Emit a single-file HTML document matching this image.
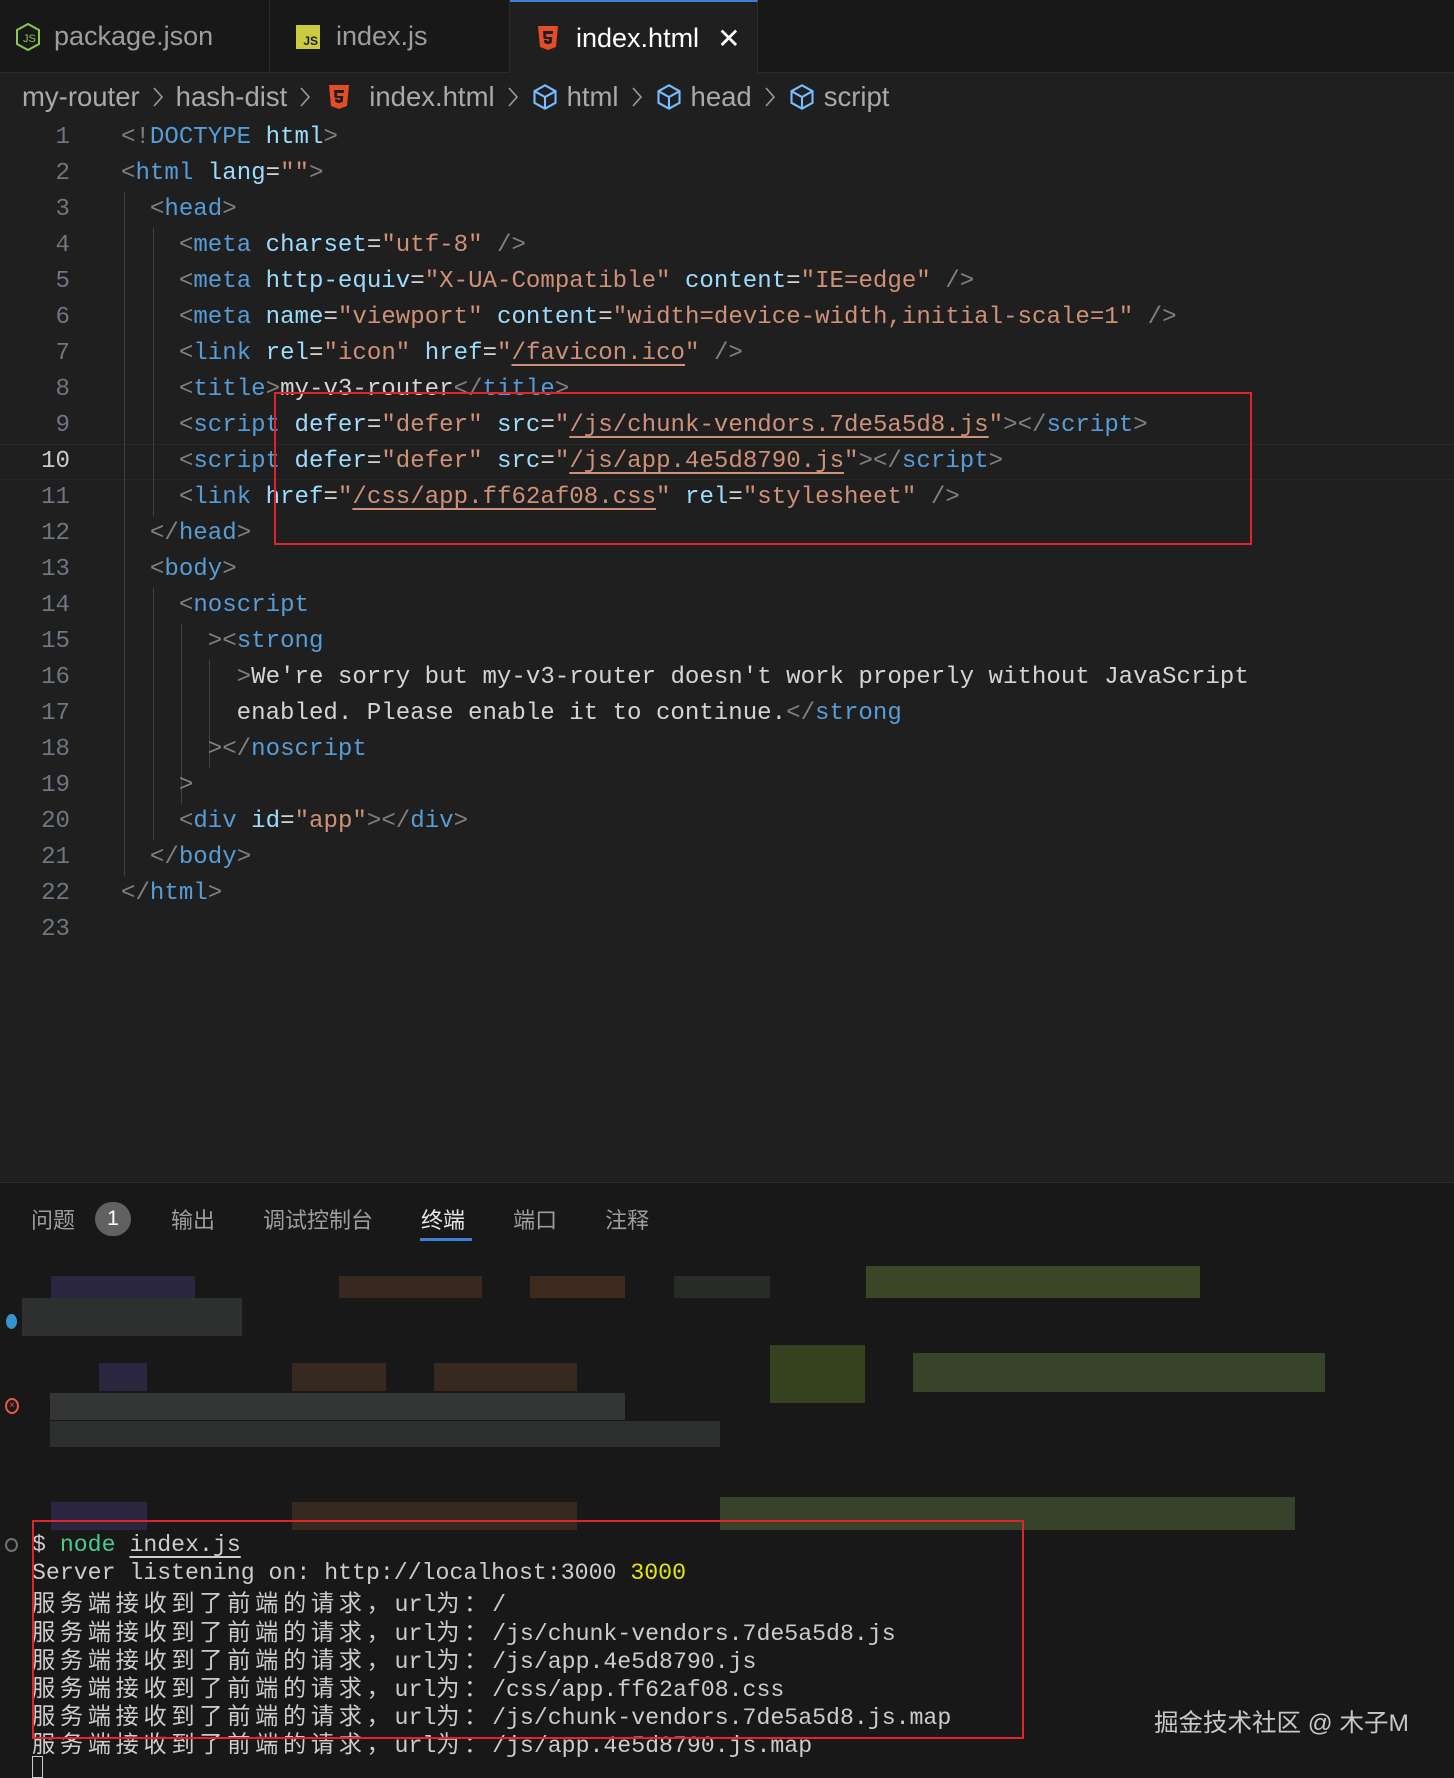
<!DOCTYPE html>
<html><head><meta charset="utf-8"><style>
*{margin:0;padding:0;box-sizing:border-box}
body{width:1454px;height:1778px;background:#1f1f1f;position:relative;overflow:hidden;font-family:"Liberation Sans","Noto Sans CJK SC",sans-serif;color:#ccc}
.abs{position:absolute}
.tabbar{left:0;top:0;width:1454px;height:73px;background:#181818;border-bottom:1px solid #2b2b2b}
.tab{top:0;height:73px;display:flex;align-items:center;font-size:27px;color:#9d9d9d;border-right:1px solid #2b2b2b}
.crumb{left:22px;top:80px;height:34px;font-size:27.5px;color:#a9a9a9;white-space:nowrap;display:flex;align-items:center;gap:0}
.sep{margin:0 12px;display:inline-block}
.code{font-family:"Liberation Mono",monospace;font-size:24.1px;white-space:pre}
.ln{left:0;width:70px;text-align:right;color:#6e7681;height:36px;line-height:36px}
.cl{left:121px;height:36px;line-height:36px}
.p{color:#808080}.t{color:#569cd6}.a{color:#9cdcfe}.s{color:#ce9178}.x{color:#d4d4d4}
.u{text-decoration:underline;text-underline-offset:5px}
.guide{width:1px;background:#404040}
.term{font-family:"Liberation Mono",monospace;font-size:23.2px;white-space:pre;color:#cccccc;left:32px;height:28px;line-height:28px}
.cj{font-family:"Noto Sans CJK SC",sans-serif;letter-spacing:4.7px}
.blk{position:absolute}
.ct{margin-left:8px}
</style></head><body>
<div class="abs tabbar"></div>
<div class="abs tab" style="left:0;width:270px;padding-left:14px">
<svg width="28" height="30" viewBox="0 0 28 30"><path d="M14 2 L25 8 L25 22 L14 28 L3 22 L3 8Z" fill="none" stroke="#8cc84b" stroke-width="2"/><text x="9" y="20" font-size="11" fill="#8cc84b" font-family="Liberation Sans">JS</text></svg>
<span style="margin-left:12px">package.json</span></div>
<div class="abs tab" style="left:270px;width:240px;padding-left:26px">
<div style="width:24px;height:24px;background:#cbcb41;color:#1f1f1f;font-size:12px;font-weight:bold;display:flex;align-items:flex-end;justify-content:flex-end;padding:0 2px 1px 0">JS</div>
<span style="margin-left:16px">index.js</span></div>
<div class="abs tab" style="left:510px;width:248px;padding-left:26px;background:#1f1f1f;border-top:2px solid #3b82d6;height:74px;color:#fff">
<svg width="24" height="28" viewBox="0 0 24 28"><path d="M2 2h20l-2 21-8 3-8-3z" fill="#e44d26"/><path d="M7 7h10l-.3 3H10l.3 3h6l-.6 6-3.7 1.3-3.7-1.3-.2-3h3l.1 1 .8.3.8-.3.2-2H7.6z" fill="#1f1f1f"/></svg>
<span style="margin-left:16px">index.html</span><span style="margin-left:18px;font-size:28px">✕</span></div>

<div class="abs crumb">my-router<svg class="sep" width="12" height="22" viewBox="0 0 12 22"><path d="M2 2 L10 11 L2 20" fill="none" stroke="#999" stroke-width="1.6"/></svg>hash-dist<svg class="sep" width="12" height="22" viewBox="0 0 12 22"><path d="M2 2 L10 11 L2 20" fill="none" stroke="#999" stroke-width="1.6"/></svg>
<svg width="24" height="28" viewBox="0 0 24 28" style="margin-left:4px"><path d="M2 2h20l-2 21-8 3-8-3z" fill="#e44d26"/><path d="M7 7h10l-.3 3H10l.3 3h6l-.6 6-3.7 1.3-3.7-1.3-.2-3h3l.1 1 .8.3.8-.3.2-2H7.6z" fill="#1f1f1f"/></svg>
<span style="margin-left:18px">index.html</span><svg class="sep" width="12" height="22" viewBox="0 0 12 22"><path d="M2 2 L10 11 L2 20" fill="none" stroke="#999" stroke-width="1.6"/></svg>
<svg width="28" height="28" viewBox="0 0 24 24"><path d="M12 2 L21 7 L21 17 L12 22 L3 17 L3 7Z M3 7 L12 12 L21 7 M12 12 L12 22" fill="none" stroke="#75beff" stroke-width="1.8"/></svg><span class="ct">html</span><svg class="sep" width="12" height="22" viewBox="0 0 12 22"><path d="M2 2 L10 11 L2 20" fill="none" stroke="#999" stroke-width="1.6"/></svg>
<svg width="28" height="28" viewBox="0 0 24 24"><path d="M12 2 L21 7 L21 17 L12 22 L3 17 L3 7Z M3 7 L12 12 L21 7 M12 12 L12 22" fill="none" stroke="#75beff" stroke-width="1.8"/></svg><span class="ct">head</span><svg class="sep" width="12" height="22" viewBox="0 0 12 22"><path d="M2 2 L10 11 L2 20" fill="none" stroke="#999" stroke-width="1.6"/></svg>
<svg width="28" height="28" viewBox="0 0 24 24"><path d="M12 2 L21 7 L21 17 L12 22 L3 17 L3 7Z M3 7 L12 12 L21 7 M12 12 L12 22" fill="none" stroke="#75beff" stroke-width="1.8"/></svg><span class="ct">script</span></div>

<div class="abs" style="left:0;top:444px;width:1454px;height:36px;border-top:1px solid #282828;border-bottom:1px solid #282828"></div>

<div class="abs guide" style="left:124px;top:192px;height:684px"></div>
<div class="abs guide" style="left:153px;top:228px;height:288px"></div>
<div class="abs guide" style="left:153px;top:588px;height:252px"></div>
<div class="abs guide" style="left:181px;top:624px;height:180px"></div>
<div class="abs guide" style="left:209px;top:660px;height:108px"></div>

<div class="code">
<div class="abs ln" style="top:120px">1</div>
<div class="abs ln" style="top:156px">2</div>
<div class="abs ln" style="top:192px">3</div>
<div class="abs ln" style="top:228px">4</div>
<div class="abs ln" style="top:264px">5</div>
<div class="abs ln" style="top:300px">6</div>
<div class="abs ln" style="top:336px">7</div>
<div class="abs ln" style="top:372px">8</div>
<div class="abs ln" style="top:408px">9</div>
<div class="abs ln" style="top:444px;color:#ccc">10</div>
<div class="abs ln" style="top:480px">11</div>
<div class="abs ln" style="top:516px">12</div>
<div class="abs ln" style="top:552px">13</div>
<div class="abs ln" style="top:588px">14</div>
<div class="abs ln" style="top:624px">15</div>
<div class="abs ln" style="top:660px">16</div>
<div class="abs ln" style="top:696px">17</div>
<div class="abs ln" style="top:732px">18</div>
<div class="abs ln" style="top:768px">19</div>
<div class="abs ln" style="top:804px">20</div>
<div class="abs ln" style="top:840px">21</div>
<div class="abs ln" style="top:876px">22</div>
<div class="abs ln" style="top:912px">23</div>

<div class="abs cl" style="top:120px"><span class="p">&lt;!</span><span class="t">DOCTYPE</span> <span class="a">html</span><span class="p">&gt;</span></div>
<div class="abs cl" style="top:156px"><span class="p">&lt;</span><span class="t">html</span> <span class="a">lang</span><span class="x">=</span><span class="s">""</span><span class="p">&gt;</span></div>
<div class="abs cl" style="top:192px">  <span class="p">&lt;</span><span class="t">head</span><span class="p">&gt;</span></div>
<div class="abs cl" style="top:228px">    <span class="p">&lt;</span><span class="t">meta</span> <span class="a">charset</span><span class="x">=</span><span class="s">"utf-8"</span> <span class="p">/&gt;</span></div>
<div class="abs cl" style="top:264px">    <span class="p">&lt;</span><span class="t">meta</span> <span class="a">http-equiv</span><span class="x">=</span><span class="s">"X-UA-Compatible"</span> <span class="a">content</span><span class="x">=</span><span class="s">"IE=edge"</span> <span class="p">/&gt;</span></div>
<div class="abs cl" style="top:300px">    <span class="p">&lt;</span><span class="t">meta</span> <span class="a">name</span><span class="x">=</span><span class="s">"viewport"</span> <span class="a">content</span><span class="x">=</span><span class="s">"width=device-width,initial-scale=1"</span> <span class="p">/&gt;</span></div>
<div class="abs cl" style="top:336px">    <span class="p">&lt;</span><span class="t">link</span> <span class="a">rel</span><span class="x">=</span><span class="s">"icon"</span> <span class="a">href</span><span class="x">=</span><span class="s">"<span class="u">/favicon.ico</span>"</span> <span class="p">/&gt;</span></div>
<div class="abs cl" style="top:372px">    <span class="p">&lt;</span><span class="t">title</span><span class="p">&gt;</span><span class="x">my-v3-router</span><span class="p">&lt;/</span><span class="t">title</span><span class="p">&gt;</span></div>
<div class="abs cl" style="top:408px">    <span class="p">&lt;</span><span class="t">script</span> <span class="a">defer</span><span class="x">=</span><span class="s">"defer"</span> <span class="a">src</span><span class="x">=</span><span class="s">"<span class="u">/js/chunk-vendors.7de5a5d8.js</span>"</span><span class="p">&gt;&lt;/</span><span class="t">script</span><span class="p">&gt;</span></div>
<div class="abs cl" style="top:444px">    <span class="p">&lt;</span><span class="t">script</span> <span class="a">defer</span><span class="x">=</span><span class="s">"defer"</span> <span class="a">src</span><span class="x">=</span><span class="s">"<span class="u">/js/app.4e5d8790.js</span>"</span><span class="p">&gt;&lt;/</span><span class="t">script</span><span class="p">&gt;</span></div>
<div class="abs cl" style="top:480px">    <span class="p">&lt;</span><span class="t">link</span> <span class="a">href</span><span class="x">=</span><span class="s">"<span class="u">/css/app.ff62af08.css</span>"</span> <span class="a">rel</span><span class="x">=</span><span class="s">"stylesheet"</span> <span class="p">/&gt;</span></div>
<div class="abs cl" style="top:516px">  <span class="p">&lt;/</span><span class="t">head</span><span class="p">&gt;</span></div>
<div class="abs cl" style="top:552px">  <span class="p">&lt;</span><span class="t">body</span><span class="p">&gt;</span></div>
<div class="abs cl" style="top:588px">    <span class="p">&lt;</span><span class="t">noscript</span></div>
<div class="abs cl" style="top:624px">      <span class="p">&gt;&lt;</span><span class="t">strong</span></div>
<div class="abs cl" style="top:660px">        <span class="p">&gt;</span><span class="x">We're sorry but my-v3-router doesn't work properly without JavaScript</span></div>
<div class="abs cl" style="top:696px">        <span class="x">enabled. Please enable it to continue.</span><span class="p">&lt;/</span><span class="t">strong</span></div>
<div class="abs cl" style="top:732px">      <span class="p">&gt;&lt;/</span><span class="t">noscript</span></div>
<div class="abs cl" style="top:768px">    <span class="p">&gt;</span></div>
<div class="abs cl" style="top:804px">    <span class="p">&lt;</span><span class="t">div</span> <span class="a">id</span><span class="x">=</span><span class="s">"app"</span><span class="p">&gt;&lt;/</span><span class="t">div</span><span class="p">&gt;</span></div>
<div class="abs cl" style="top:840px">  <span class="p">&lt;/</span><span class="t">body</span><span class="p">&gt;</span></div>
<div class="abs cl" style="top:876px"><span class="p">&lt;/</span><span class="t">html</span><span class="p">&gt;</span></div>
</div>

<div class="abs" style="left:274px;top:392px;width:978px;height:153px;border:2px solid #e0242b"></div>

<div class="abs" style="left:0;top:1182px;width:1454px;height:596px;background:#181818;border-top:1px solid #2b2b2b"></div>
<div class="abs" style="left:31px;top:1204px;font-size:22px;color:#9d9d9d;display:flex;align-items:center;height:30px;font-family:'Noto Sans CJK SC',sans-serif">
<span>问题</span>
<span style="margin-left:20px;width:36px;height:34px;border-radius:17px;background:#616161;color:#fff;display:inline-flex;align-items:center;justify-content:center;font-family:'Liberation Sans';font-size:21px">1</span>
<span style="margin-left:40px">输出</span>
<span style="margin-left:48px">调试控制台</span>
<span style="margin-left:48px;color:#e7e7e7">终端</span>
<span style="margin-left:48px">端口</span>
<span style="margin-left:48px">注释</span></div>
<div class="abs" style="left:420px;top:1238px;width:52px;height:3px;background:#3b82d6"></div>

<div class="blk" style="left:51px;top:1276px;width:144px;height:22px;background:#2b2640"></div>
<div class="blk" style="left:339px;top:1276px;width:143px;height:22px;background:#37291f"></div>
<div class="blk" style="left:530px;top:1276px;width:95px;height:22px;background:#3d2a1f"></div>
<div class="blk" style="left:674px;top:1276px;width:96px;height:22px;background:#292b29"></div>
<div class="blk" style="left:866px;top:1266px;width:334px;height:32px;background:#3a4625"></div>
<div class="blk" style="left:22px;top:1298px;width:220px;height:38px;background:#2e302f"></div>
<div class="blk" style="left:99px;top:1363px;width:48px;height:28px;background:#2b2640"></div>
<div class="blk" style="left:292px;top:1363px;width:94px;height:28px;background:#37291f"></div>
<div class="blk" style="left:434px;top:1363px;width:143px;height:28px;background:#37291f"></div>
<div class="blk" style="left:770px;top:1345px;width:95px;height:58px;background:#36421f"></div>
<div class="blk" style="left:913px;top:1353px;width:412px;height:39px;background:#37442a"></div>
<div class="blk" style="left:50px;top:1393px;width:575px;height:27px;background:#343535"></div>
<div class="blk" style="left:50px;top:1421px;width:670px;height:26px;background:#2d2e2e"></div>
<div class="blk" style="left:51px;top:1502px;width:96px;height:28px;background:#2b2640"></div>
<div class="blk" style="left:292px;top:1502px;width:285px;height:28px;background:#36291f"></div>
<div class="blk" style="left:720px;top:1497px;width:575px;height:33px;background:#36432a"></div>

<div class="abs" style="left:6px;top:1314px;width:11px;height:15px;border-radius:50%;background:#3794d1"></div>
<div class="abs" style="left:5px;top:1398px;width:14px;height:16px;border-radius:50%;border:2px solid #e8564a;color:#e8564a;font-size:10px;line-height:12px;text-align:center">×</div>
<div class="abs" style="left:5px;top:1538px;width:13px;height:14px;border-radius:50%;border:2px solid #707070"></div>

<div class="abs term" style="top:1531px">$ <span style="color:#4ec98c">node</span> <span class="u">index.js</span></div>
<div class="abs term" style="top:1559px">Server listening on: http://localhost:3000 <span style="color:#e5e510">3000</span></div>
<div class="abs term" style="top:1587px"><span class="cj">服务端接收到了前端的请求，</span>url<span class="cj">为：</span>/</div>
<div class="abs term" style="top:1616px"><span class="cj">服务端接收到了前端的请求，</span>url<span class="cj">为：</span>/js/chunk-vendors.7de5a5d8.js</div>
<div class="abs term" style="top:1644px"><span class="cj">服务端接收到了前端的请求，</span>url<span class="cj">为：</span>/js/app.4e5d8790.js</div>
<div class="abs term" style="top:1672px"><span class="cj">服务端接收到了前端的请求，</span>url<span class="cj">为：</span>/css/app.ff62af08.css</div>
<div class="abs term" style="top:1700px"><span class="cj">服务端接收到了前端的请求，</span>url<span class="cj">为：</span>/js/chunk-vendors.7de5a5d8.js.map</div>
<div class="abs term" style="top:1728px"><span class="cj">服务端接收到了前端的请求，</span>url<span class="cj">为：</span>/js/app.4e5d8790.js.map</div>
<div class="abs" style="left:32px;top:1756px;width:11px;height:22px;border:1.5px solid #ccc"></div>

<div class="abs" style="left:32px;top:1520px;width:992px;height:219px;border:2px solid #e0242b"></div>

<div class="abs" style="left:1154px;top:1704px;font-size:24.5px;color:#c8c8c8;white-space:nowrap;font-family:'Liberation Sans','Noto Sans CJK SC',sans-serif">掘金技术社区 @ 木子M</div>
</body></html>
